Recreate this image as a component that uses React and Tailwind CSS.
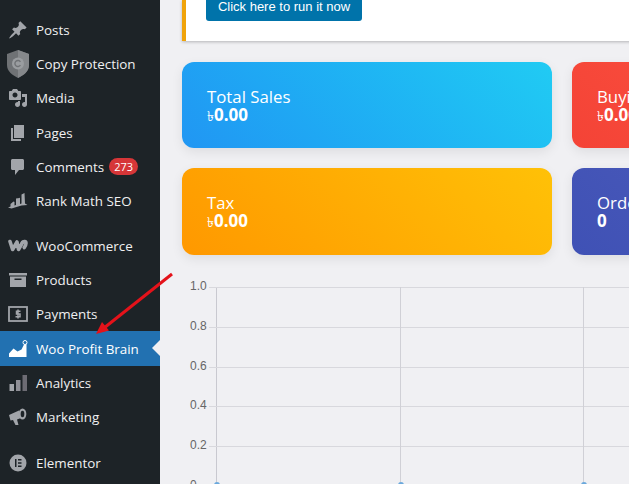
import React from 'react';

const ui = { fontFamily: '"Open Sans", sans-serif' };

function PostsIcon() {
  return (
    <svg width="20" height="20" viewBox="0 0 20 20" fill="#a2a5aa">
      <path d="M10.44 3.02l1.82-1.82 6.36 6.35-1.83 1.82c-1.05-.68-2.48-.57-3.41.36l-.75.75c-.92.93-1.04 2.35-.35 3.41l-1.83 1.82-2.41-2.41-2.8 2.79c-.42.42-3.38 2.71-3.8 2.29s1.86-3.39 2.28-3.81l2.79-2.79L4.1 9.36l1.83-1.82c1.05.69 2.48.57 3.4-.36l.75-.75c.93-.92 1.05-2.35.36-3.41z" />
    </svg>
  );
}

function ShieldIcon() {
  return (
    <svg width="22" height="28" viewBox="0 0 22 28">
      <path d="M11 0l11 4v11c0 6-5 10-11 13C5 25 0 21 0 15V4z" fill="#6f7275" />
      <path d="M11 0l11 4v11c0 6-5 10-11 13z" fill="#85888b" />
      <circle cx="11" cy="13.5" r="6" fill="#9a9da0" />
      <path d="M13.4 11.8a3 3 0 1 0 0 3.4" fill="none" stroke="#6f7275" strokeWidth="1.4" />
    </svg>
  );
}

function MediaIcon() {
  return (
    <svg width="20" height="20" viewBox="0 0 20 20" fill="#a2a5aa">
      <path d="M13 11V4c0-.55-.45-1-1-1h-1.67L9 1H5L3.67 3H2c-.55 0-1 .45-1 1v7c0 .55.45 1 1 1h10c.55 0 1-.45 1-1zM7 4.5c1.38 0 2.5 1.12 2.5 2.5S8.38 9.5 7 9.5 4.5 8.38 4.5 7 5.62 4.5 7 4.5zM14 6h5v10.5c0 1.38-1.12 2.5-2.5 2.5S14 17.88 14 16.500s1.120-2.500 2.500-2.500c.17 0 .34.02.5.05V9h-3V6zm-4 8.050V13h2v3.500c0 1.380-1.120 2.500-2.500 2.500S7 17.880 7 16.500 8.120 14 9.500 14c.17 0 .34.02.5.05z" />
    </svg>
  );
}

function PagesIcon() {
  return (
    <svg width="20" height="20" viewBox="0 0 20 20" fill="#a2a5aa">
      <path d="M6 15V2h10v13H6zm-1 1h8v2H3V5h2v11z" />
    </svg>
  );
}

function CommentsIcon() {
  return (
    <svg width="20" height="20" viewBox="0 0 20 20" fill="#a2a5aa">
      <path d="M4.500 2h10c.8 0 1.500.7 1.500 1.500v8c0 .8-.7 1.500-1.500 1.500H11l-4 5v-5H4.500C3.700 13 3 12.300 3 11.500v-8C3 2.700 3.700 2 4.500 2z" />
    </svg>
  );
}

function RankMathIcon() {
  return (
    <svg width="20" height="20" viewBox="0 0 20 20" fill="#a2a5aa">
      <path d="M0 16.500l2.500-1V13l3-2.500 1 .5v3.500L8 14V7.500l3.500-.5.500-.5V13l1.500-.5V3.500l3-1.500.5 10.500 2.500 1.500-6 .5-5 1.500-5 1.500z" />
    </svg>
  );
}

function WooIcon() {
  return (
    <svg width="20" height="20" viewBox="0 0 20 20" fill="none" stroke="#a2a5aa" strokeWidth="3.600" strokeLinejoin="round" strokeLinecap="round">
      <path d="M2 5.500l2.600 8 4.400-7.500 1.500 7.500 4-7" />
      <path d="M14.500 6.500c1-1.300 3.500-1.300 3.500.8 0 1.500-.8 3-1.800 4.200" />
    </svg>
  );
}

function ProductsIcon() {
  return (
    <svg width="20" height="20" viewBox="0 0 20 20" fill="#a2a5aa">
      <path fillRule="evenodd" d="M1 3h18v2.500H1zM2 6.500h16V17H2zM6.500 8.500V10h7V8.500z" />
    </svg>
  );
}

function PaymentsIcon() {
  return (
    <svg width="20" height="20" viewBox="0 0 20 20" fill="none">
      <rect x="1" y="3" width="18" height="14" stroke="#a2a5aa" strokeWidth="1.800" />
      <path d="M12.500 7.200H8.500v2.800h3.500v2.800H7.500M10 5.500v9" stroke="#a2a5aa" strokeWidth="1.500" />
    </svg>
  );
}

function BrainIcon() {
  return (
    <svg width="20" height="20" viewBox="0 0 20 20" fill="#fff">
      <path d="M1 18v-3.500L5.500 9.500l4 3 4-2 3-6 2 .5V18z" />
      <circle cx="17" cy="3.500" r="2" fill="#2271b1" stroke="#fff" strokeWidth="1" />
    </svg>
  );
}

function AnalyticsIcon() {
  return (
    <svg width="20" height="20" viewBox="0 0 20 20">
      <path d="M1.500 11h4.500v7H1.500z" fill="#a2a5aa" />
      <path d="M8 7h4.500v11H8z" fill="#8f8f96" />
      <path d="M14.500 2H19v16h-4.500z" fill="#6d6c74" />
    </svg>
  );
}

function MarketingIcon() {
  return (
    <svg width="20" height="20" viewBox="0 0 20 20" fill="#a2a5aa">
      <path d="M1 8l10-4.500 2 7.500-4 1.500 1.500 5.500H7.500L5 13l-2.500.5z" />
      <ellipse cx="14.500" cy="7" rx="3.800" ry="5.500" />
      <ellipse cx="14.500" cy="7" rx="1.800" ry="3.200" fill="#1d2327" />
    </svg>
  );
}

function ElementorIcon() {
  return (
    <svg width="20" height="20" viewBox="0 0 20 20">
      <circle cx="10" cy="10" r="8.500" fill="#a2a5aa" />
      <path d="M7 6h1.500v8H7zM10 6h3.500v1.500H10zM10 9.250h3.500v1.500H10zM10 12.500h3.500V14H10z" fill="#1d2327" />
    </svg>
  );
}

function MenuItem({ icon, label, badge, active }) {
  return (
    <div className={`relative flex items-center text-[13.4px] ${active ? 'h-[35px] bg-[#2271b1] text-white' : 'h-[34.2px] text-[#f0f0f1]'}`}>
      <span className="flex w-[36px] shrink-0 justify-center">{icon}</span>
      <span className="whitespace-nowrap">{label}</span>
      {badge && (
        <span className="ml-[5px] rounded-full bg-[#d63638] px-[5px] text-[11px] leading-[17px] text-white">{badge}</span>
      )}
      {active && (
        <span className="absolute right-0 top-[9px] h-0 w-0 border-y-[8px] border-r-[8px] border-y-transparent border-r-[#f0f0f3]" />
      )}
    </div>
  );
}

function StatCard({ title, value, gradient, tall }) {
  const isMoney = value.startsWith('৳');
  return (
    <div className={`flex w-[370px] shrink-0 flex-col justify-center rounded-[12px] pl-[25px] text-white shadow-[0_4px_12px_rgba(0,0,0,0.08)] ${tall ? 'h-[87px]' : 'h-[86px] pt-[2px]'} ${gradient}`}>
      <div className="text-[16.8px] leading-[19px]">{title}</div>
      <div className="text-[17px] font-bold leading-[18px]">
        {isMoney && <span className="text-[14px] font-normal">৳</span>}
        {isMoney ? value.slice(1) : value}
      </div>
    </div>
  );
}

function GridRow({ label }) {
  return (
    <div className="relative h-[39.8px] border-t border-[#d8d8dd]">
      <span className="absolute left-[-27px] top-[-10px] font-['Liberation_Sans',sans-serif] text-[12px] leading-[16px] text-[#666]">{label}</span>
      <span className="absolute left-[-8px] top-[-1px] h-[1px] w-[8px] bg-[#d8d8dd]" />
    </div>
  );
}

export default function App() {
  return (
    <div className="relative flex h-[484px] w-[629px] overflow-hidden bg-[#f0f0f3]" style={ui}>
      <aside className="flex w-[160px] shrink-0 flex-col bg-[#1d2327] pt-[13px]">
        <MenuItem icon={<PostsIcon />} label="Posts" />
        <MenuItem icon={<ShieldIcon />} label="Copy Protection" />
        <MenuItem icon={<MediaIcon />} label="Media" />
        <MenuItem icon={<PagesIcon />} label="Pages" />
        <MenuItem icon={<CommentsIcon />} label="Comments" badge="273" />
        <MenuItem icon={<RankMathIcon />} label="Rank Math SEO" />
        <div className="h-[10.5px]" />
        <MenuItem icon={<WooIcon />} label="WooCommerce" />
        <MenuItem icon={<ProductsIcon />} label="Products" />
        <MenuItem icon={<PaymentsIcon />} label="Payments" />
        <MenuItem icon={<BrainIcon />} label="Woo Profit Brain" active />
        <MenuItem icon={<AnalyticsIcon />} label="Analytics" />
        <MenuItem icon={<MarketingIcon />} label="Marketing" />
        <div className="h-[11px]" />
        <MenuItem icon={<ElementorIcon />} label="Elementor" />
      </aside>

      <main className="relative min-w-0 flex-1 pl-[22px]">
        <div className="mb-[21px] h-[41px] w-[480px] border-l-[4px] border-[#f0a30a] bg-white pl-[20px] shadow-[0_1px_3px_rgba(0,0,0,0.25)]">
          <div className="h-[21px] w-[156px] rounded-b-[3px] bg-[#0073aa] text-center font-['Liberation_Sans',sans-serif] text-[13px] leading-[13px] text-white">
            Click here to run it now
          </div>
        </div>

        <div className="mb-[20px] flex gap-[20px]">
          <StatCard title="Total Sales" value="৳0.00" gradient="bg-linear-45 from-[#2196f3] to-[#21cbf3]" />
          <StatCard title="Buying Cost" value="৳0.00" gradient="bg-linear-45 from-[#f44336] to-[#ff5745]" />
        </div>
        <div className="mb-[32px] flex gap-[20px]">
          <StatCard title="Tax" value="৳0.00" gradient="bg-linear-45 from-[#ff9800] to-[#ffc107]" tall />
          <StatCard title="Orders" value="0" gradient="bg-linear-45 from-[#3f51b5] to-[#5360bd]" tall />
        </div>

        <div className="relative ml-[34px] w-[500px] border-l border-[#c9c9d0]">
          <GridRow label="1.0" />
          <GridRow label="0.8" />
          <GridRow label="0.6" />
          <GridRow label="0.4" />
          <GridRow label="0.2" />
          <GridRow label="0" />
          {/* vertical grid lines and data points lie over the rows */}
          <span className="absolute left-[183px] top-0 h-full w-px bg-[#d0d0d6]" />
          <span className="absolute left-[366px] top-0 h-full w-px bg-[#d0d0d6]" />
          <span className="absolute left-[-3px] top-[195px] h-[6px] w-[6px] rounded-full bg-[#6aa8dc]" />
          <span className="absolute left-[180.500px] top-[195px] h-[6px] w-[6px] rounded-full bg-[#6aa8dc]" />
          <span className="absolute left-[363.500px] top-[195px] h-[6px] w-[6px] rounded-full bg-[#6aa8dc]" />
        </div>
      </main>

      <svg className="absolute left-0 top-0" width="629" height="484" viewBox="0 0 629 484" fill="none">
        <path d="M172 274L104 328" stroke="#e4121a" strokeWidth="3" />
        <path d="M96 334l6-12 7 8.500z" fill="#e4121a" />
      </svg>
    </div>
  );
}
